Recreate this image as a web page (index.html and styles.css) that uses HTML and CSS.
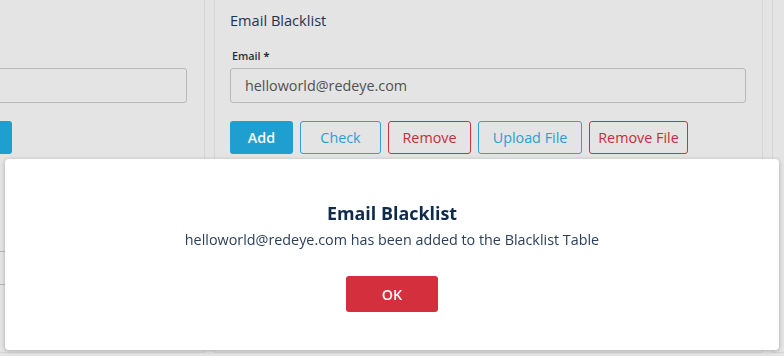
FILE: index.html
```html
<!DOCTYPE html>
<html>
<head>
<meta charset="utf-8">
<link rel="stylesheet" href="styles.css">
</head>
<body>
<div class="page">
  <section class="card card-left">
    <div class="field-input"></div>
    <div class="btn-row btn-row-left"><span class="btn btn-solid"></span></div>
    <div class="table">
      <div class="row"></div>
      <div class="row"></div>
    </div>
  </section>
  <section class="card card-main">
    <h2 class="card-title">Email Blacklist</h2>
    <label class="field-label">Email <span class="req">*</span></label>
    <div class="field-input">helloworld@redeye.com</div>
    <div class="btn-row">
      <span class="btn btn-solid">Add</span>
      <span class="btn btn-outline-blue w-check">Check</span>
      <span class="btn btn-outline-red w-remove">Remove</span>
      <span class="btn btn-outline-blue w-upload">Upload File</span>
      <span class="btn btn-outline-red w-removefile">Remove File</span>
    </div>
  </section>
  <section class="card card-right"></section>
</div>

<div class="modal">
  <h3 class="modal-title">Email Blacklist</h3>
  <p class="modal-text">helloworld@redeye.com has been added to the Blacklist Table</p>
  <button class="modal-ok">OK</button>
</div>
</body>
</html>
```

FILE: styles.css
```css
* { box-sizing: border-box; }
html, body {
  margin: 0;
  padding: 0;
  width: 784px;
  height: 356px;
  overflow: hidden;
  background: #e4e4e4;
  font-family: "Open Sans", "Noto Sans", sans-serif;
}
.page {
  display: flex;
  gap: 9px;
  margin-left: -120px;
  margin-top: -20px;
  height: 373px;
}
.card {
  flex: none;
  border: 1px solid #d6d6d6;
  border-top: none;
  background: #e4e4e4;
  height: 100%;
}
.card-left {
  width: 325px;
  padding: 88px 17px 0 16px;
}
.card-main {
  width: 549px;
  padding: 25px 16px 0 15px;
}
.card-right {
  width: 200px;
}
.card-title {
  margin: 0 0 13px 0;
  font-size: 14.6px;
  font-weight: 400;
  color: #1b3553;
  line-height: 30px;
}
.field-label {
  display: block;
  font-size: 10.8px;
  font-weight: 600;
  color: #1f2f44;
  margin: 0 0 4px 2px;
  line-height: 16px;
}
.req { font-weight: 700; }
.field-input {
  height: 35px;
  border: 1px solid #b9b9b9;
  border-radius: 3px;
  background: #e4e4e4;
  padding: 0 14px;
  font-size: 14.35px;
  line-height: 33px;
  color: #515151;
}
.btn-row {
  display: flex;
  gap: 7px;
  margin-top: 18px;
}
.btn-row-left { padding-left: 52px; }
.btn {
  display: inline-flex;
  align-items: center;
  justify-content: center;
  height: 33px;
  padding: 0;
  border-radius: 3px;
  font-size: 14.35px;
  border: 1px solid transparent;
}
.btn-solid {
  background: #1f9fd0;
  color: #f4f8fb;
  font-weight: 600;
  width: 63px;
}
.btn-outline-blue {
  border-color: #2aa4d6;
  color: #2aa0d2;
}
.btn-outline-red {
  border-color: #c93340;
  color: #c22e3a;
}
.w-check { width: 81px; }
.w-remove { width: 83px; }
.w-upload { width: 104px; }
.w-removefile { width: 99px; }
.table { margin-top: 97px; margin-left: -30px; }
.row {
  height: 33px;
  border-top: 1px solid #b6b6b6;
}

.modal {
  position: fixed;
  left: 5px;
  top: 159px;
  width: 774px;
  height: 191px;
  background: #ffffff;
  border-radius: 4px;
  box-shadow: 0 1px 4px rgba(0,0,0,0.25);
  display: flex;
  flex-direction: column;
  align-items: center;
  padding-top: 41px;
}
.modal-title {
  margin: 0;
  font-size: 17.9px;
  font-weight: 700;
  color: #0f2b4c;
  line-height: 26px;
}
.modal-text {
  margin: 4px 0 0 0;
  font-size: 14.35px;
  color: #2a3f58;
  line-height: 20px;
}
.modal-ok {
  margin-top: 26px;
  width: 92px;
  height: 36px;
  border: none;
  border-radius: 3px;
  background: #d42f3c;
  color: #fff;
  font-family: "Open Sans", "Noto Sans", sans-serif;
  font-size: 14.35px;
  font-weight: 600;
}
```
